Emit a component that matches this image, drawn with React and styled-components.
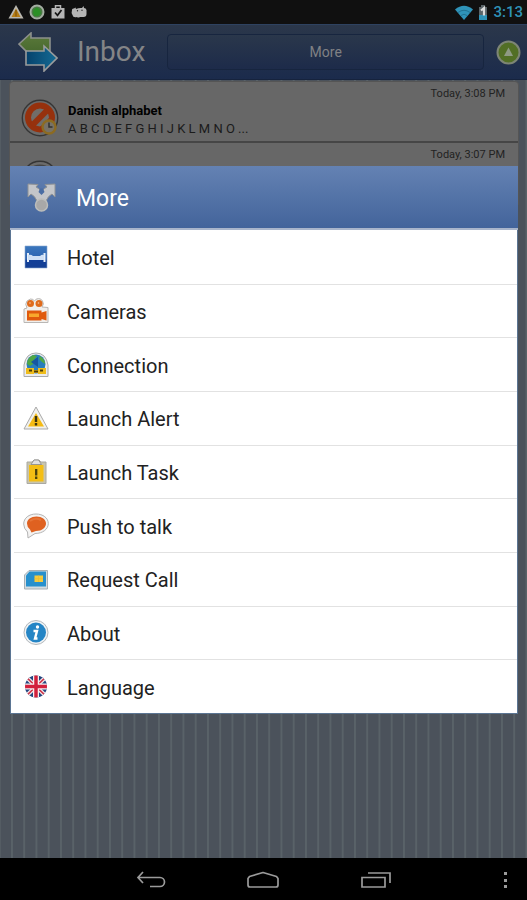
import React from "react";
import styled, { createGlobalStyle } from "styled-components";

const GlobalStyle = createGlobalStyle`
  * { box-sizing: border-box; }
  body { margin: 0; font-family: Roboto, "Noto Sans", sans-serif; background: #4b525b; }
  button { font: inherit; border: 0; padding: 0; background: none; cursor: pointer; }
  h1, h2, h3, p, ul { margin: 0; padding: 0; }
  svg { display: block; flex: none; }
`;

const Page = styled.div`
  position: relative;
  min-height: 100vh;
  display: flex;
  flex-direction: column;
`;

const StatusBar = styled.div`
  display: flex;
  align-items: center;
  justify-content: space-between;
  height: 24px;
  padding: 0 4px 0 8px;
  background: #101010;
`;

const StatusGroup = styled.div`
  display: flex;
  align-items: center;
  gap: 5px;
`;

const Clock = styled.time`
  color: #2f93b8;
  font-size: 15px;
  font-weight: 500;
  line-height: 24px;
`;

const Header = styled.header`
  display: flex;
  align-items: center;
  height: 56px;
  padding: 0 6px 0 18px;
  background: linear-gradient(#2b374a, #1b2b4c);
  border-top: 1px solid #2e4260;
  border-bottom: 1px solid #16233d;
`;

const Title = styled.h1`
  margin: 0 22px 0 19px;
  color: #848587;
  font-size: 28px;
  font-weight: 400;
  line-height: 32px;
`;

const MoreButton = styled.button`
  flex: 1;
  height: 36px;
  margin-right: 12px;
  border: 1px solid #17253f;
  border-radius: 4px;
  background: linear-gradient(#2a374b, #1d2b4a);
  color: #808184;
  font-size: 14px;
`;

const Main = styled.main`
  flex: 1;
  padding: 1px 8px 0 9px;
  background-color: #4b525b;
  background-image: linear-gradient(90deg, #596268 2px, transparent 2px);
  background-position: 11px 0;
  background-size: calc(100% / 43) 100%;
`;

const MessageList = styled.ul`
  list-style: none;
  border: 1px solid #555;
  border-radius: 4px 4px 0 0;
  background: #676767;
`;

const Message = styled.li`
  display: flex;
  align-items: flex-start;
  height: 61px;
  padding: 4px 13px 0 11px;
  border-bottom: 2px solid #464646;

  > svg { margin-top: 13px; }
`;

const MessageBody = styled.div`
  flex: 1;
  min-width: 0;
  margin-left: 9px;
  padding-top: 16px;
  color: #1b1b1b;
  font-size: 13px;
  line-height: 18px;
  white-space: nowrap;
`;

const Sender = styled.h3`
  color: #000;
  font-size: 13px;
  font-weight: 700;
  line-height: 18px;
`;

const MessageTime = styled.time`
  color: #222;
  font-size: 11px;
  line-height: 16px;
`;

const Overlay = styled.div`
  position: absolute;
  inset: 22px 0 42px;
  display: flex;
  align-items: center;
  padding: 0 9px 0 10px;
`;

const Dialog = styled.section`
  flex: 1;
  border: 1px solid #5b7593;
  border-top: 0;
  background: #fff;
`;

const DialogHeader = styled.header`
  display: flex;
  align-items: center;
  height: 64px;
  margin: 0 -1px;
  padding: 0 17px;
  gap: 20px;
  background: linear-gradient(#6482b3, #43649b);
  border-bottom: 2px solid #a9b5cb;
`;

const DialogTitle = styled.h2`
  padding-top: 3px;
  color: #fff;
  font-size: 23px;
  font-weight: 400;
  line-height: 28px;
`;

const Menu = styled.ul`
  list-style: none;
  display: grid;
  grid-auto-rows: 1fr;
  min-height: 483px;
`;

const MenuRow = styled.li`
  display: flex;
  margin-left: 3px;

  & + & { border-top: 1px solid #e2e2e2; }
`;

const MenuButton = styled.button`
  flex: 1;
  display: flex;
  align-items: center;
  gap: 18px;
  padding: 2px 9px 0;
  color: #222;
  font-size: 20px;
  line-height: 24px;
  text-align: left;

  svg { margin-bottom: 2px; }
`;

const NavBar = styled.nav`
  display: grid;
  grid-template-columns: 18% repeat(3, 1fr) 18%;
  height: 42px;
  background: #000;
`;

const NavButton = styled.button`
  display: flex;
  align-items: center;
  justify-content: ${(p) => (p.$end ? "flex-end" : "center")};
  padding: 2px ${(p) => (p.$end ? 19 : 0)}px 0 0;
  grid-column: ${(p) => p.$column};
`;

const StatusAlert = () => (
  <svg width="16" height="16" viewBox="0 0 16 16">
    <path d="M8 1 15.500 14.500H.5Z" fill="#b9b7b0" />
    <path d="M8 4.500 12.500 13h-9Z" fill="#b57c14" />
    <path d="M8 6v6.500" stroke="#8a5c0c" strokeWidth="1.500" />
  </svg>
);

const StatusSync = () => (
  <svg width="16" height="16" viewBox="0 0 16 16">
    <circle cx="8" cy="8" r="6.500" fill="#4b7a46" stroke="#a4ada2" strokeWidth="2" />
    <path d="M4.500 5.500 8 3.500l3 2 1 4-3 2.500H5.500L4 9Z" fill="#2b8f26" />
  </svg>
);

const StatusBag = () => (
  <svg width="16" height="16" viewBox="0 0 16 16">
    <path d="M5.500 4V1.800h5V4" fill="none" stroke="#b5b5b5" strokeWidth="1.500" />
    <path d="M1.500 4h13v10.500h-13Z" fill="#b5b5b5" />
    <path d="m5 8.500 2.500 2.800L11.500 6" fill="none" stroke="#151515" strokeWidth="1.700" />
  </svg>
);

const StatusDroid = () => (
  <svg width="16" height="16" viewBox="0 0 16 16">
    <path d="M1 6q0-2 2-1.500L4.500 3.500 5 5q3-1.500 6-1l1.500-2 .5 2q2 0 2.500 2v4q0 3-3 3H9q-2 1-3 0-4 1-4.500-2Q0 9 1 6Z" fill="#b5b5b5" />
    <circle cx="6.500" cy="6.800" r=".7" fill="#222" />
    <circle cx="11" cy="6.300" r=".7" fill="#222" />
  </svg>
);

const Wifi = () => (
  <svg width="18" height="15" viewBox="0 0 18 15">
    <path d="M0 4.500Q9-3 18 4.500L9 15Z" fill="#2f93b8" />
    <path d="M3 7.500q6-4.500 12 0M6 10.500q3-2.500 6 0" fill="none" stroke="#1d6a88" strokeWidth=".8" />
  </svg>
);

const Battery = () => (
  <svg width="10" height="15" viewBox="0 0 10 15">
    <path d="M3 0h4v2h2v13H1V2h2Z" fill="#5b6468" />
    <path d="M1 10h8v5H1Z" fill="#2f93b8" />
    <path d="M3 5.500 6 3v7.500" fill="none" stroke="#ddd" strokeWidth="2.200" />
  </svg>
);

const ArrowsLogo = () => (
  <svg width="40" height="40" viewBox="0 0 40 40">
    <defs>
      <linearGradient id="logoGreen" x1="0" x2="0" y1="0" y2="1">
        <stop stopColor="#5c7a3b" /><stop offset="1" stopColor="#44662c" />
      </linearGradient>
      <linearGradient id="logoBlue">
        <stop stopColor="#06426c" /><stop offset="1" stopColor="#156b94" />
      </linearGradient>
    </defs>
    <path d="M1 12 13 1v5h19v15H13v3Z" fill="url(#logoGreen)" stroke="#8d908c" strokeWidth="1.600" />
    <path d="M8 19h18v-5l13 12-13 13v-6H8Z" fill="url(#logoBlue)" stroke="#9a9c9c" strokeWidth="1.600" />
  </svg>
);

const UpBadge = () => (
  <svg width="25" height="25" viewBox="0 0 25 25">
    <circle cx="12.500" cy="12.500" r="11" fill="#526f25" stroke="#7d8575" strokeWidth="2" />
    <path d="M12.500 7.500 17 16H8Z" fill="#8f9a83" />
  </svg>
);

const BlockedClock = () => (
  <svg width="38" height="38" viewBox="0 0 38 38">
    <circle cx="19" cy="19" r="17.700" fill="#6b6b6b" stroke="#353535" strokeWidth="1.400" />
    <circle cx="19" cy="18.500" r="12" fill="#716d69" stroke="#96310d" strokeWidth="6" />
    <path d="m11 26.500 16-16" stroke="#96310d" strokeWidth="6" />
    <path d="m17 30 11-11v11Z" fill="#96310d" />
    <circle cx="28" cy="28" r="6.500" fill="#777267" stroke="#8c6b22" strokeWidth="2.400" />
    <path d="M28 23.500V28h3.500" fill="none" stroke="#303030" strokeWidth="1.500" />
  </svg>
);

const RingBadge = () => (
  <svg width="38" height="38" viewBox="0 0 38 38">
    <circle cx="19" cy="19" r="17.700" fill="#6b6b6b" stroke="#353535" strokeWidth="1.400" />
    <circle cx="19" cy="19" r="14.500" fill="#444" />
  </svg>
);

const ShareFork = () => (
  <svg width="29" height="29" viewBox="0 0 29 29">
    <path d="m1 1 10 .5L9 4q3 1 5.500 5Q17 5 20 4l-2-2.500L28 1v13l-3-3q-4 2-6 7h-9q-2-5-6-7l-3 3Z" fill="#c3c5c9" stroke="#8f9295" />
    <path d="m14.500 12-3-3 1.500-3.500h3L17.500 9Z" fill="#4a6da3" />
    <circle cx="14.500" cy="22" r="6" fill="#a8a8a8" stroke="#bcbdbb" strokeWidth="1.500" />
  </svg>
);

const HotelIcon = () => (
  <svg width="26" height="26" viewBox="0 0 26 26">
    <defs>
      <linearGradient id="hotelSky" x1="0" x2="0" y1="0" y2="1">
        <stop stopColor="#3b77bd" /><stop offset=".6" stopColor="#2c62b0" /><stop offset=".65" stopColor="#123f98" /><stop offset="1" stopColor="#153f93" />
      </linearGradient>
    </defs>
    <path d="M2 2h22v22H2Z" fill="url(#hotelSky)" stroke="#8aa7d0" strokeWidth=".6" />
    <path d="M5 9v9M21.500 9v9" stroke="#e6effa" strokeWidth="2" />
    <path d="M5 11q3-1 5 1h7q2-2 4-1v5H5Z" fill="#cfe0f5" />
  </svg>
);

const CameraIcon = () => (
  <svg width="26" height="26" viewBox="0 0 26 26">
    <path d="M7.500 1a4.500 4.500 0 0 1 4 2 4.500 4.500 0 0 1 8 0q2 3-.5 6l6 .5v15H1V11l3-1Q1.500 6 4 3Z" fill="#f1efec" stroke="#b9b7b5" />
    <circle cx="7.500" cy="5.500" r="3.500" fill="#df6b1c" />
    <circle cx="16" cy="5.500" r="3.500" fill="#df6b1c" />
    <circle cx="7" cy="5" r=".8" fill="#f8c3a0" /><circle cx="15.500" cy="5" r=".8" fill="#f8c3a0" />
    <path d="M4 12.500h14.500v2l5-1.500v9.500l-5-1.500v1.500H4Z" fill="#e05a0d" />
    <path d="M6 15.500h10V19H6Z" fill="#f8a82c" />
  </svg>
);

const ConnectionIcon = () => (
  <svg width="26" height="26" viewBox="0 0 26 26">
    <path d="M1 24.500V13Q3 1 13 1t12 12v11.500Z" fill="#ececec" stroke="#a8aaad" />
    <circle cx="13" cy="12" r="9.500" fill="#277dbd" />
    <path d="M4 12q0-6 6-9l4 1-3 4-1 4-3 2ZM17 4q5 3 5 8l-3-2-3-3Z" fill="#50a744" />
    <path d="m8 10 7-5v10Z" fill="#1657a1" />
    <path d="M3 16h8v2h4v-2h8v6h-8v-1h-4v1H3Z" fill="#efbd1c" />
    <path d="M6 18.500h3M17 18.500h3M11 19.500h4" stroke="#4b3c0a" strokeWidth="2" />
  </svg>
);

const AlertIcon = () => (
  <svg width="26" height="26" viewBox="0 0 26 26">
    <path d="M13 2 25 24H1Z" fill="#f1f1ee" stroke="#a9a9a9" strokeLinejoin="round" />
    <path d="M13 8 21 21.500H5Z" fill="#f5bb14" />
    <path d="M13 11v6M13 18v2.500" stroke="#3a3410" strokeWidth="2.400" />
  </svg>
);

const TaskIcon = () => (
  <svg width="26" height="26" viewBox="0 0 26 26">
    <path d="M4 3h5l2-2h5l2 2h5v21.500H4Z" fill="#c9c5ad" stroke="#aaa9a2" />
    <path d="M6 6h14.500v16.500H6Z" fill="#f4be14" />
    <path d="M8 5.500h10.500l-3-4.500h-4.500Z" fill="#e0e0e0" stroke="#888" strokeWidth=".8" />
    <path d="M13.200 10v6.500M13.200 17.500V20" stroke="#4a420d" strokeWidth="2.300" />
  </svg>
);

const TalkIcon = () => (
  <svg width="26" height="26" viewBox="0 0 26 26">
    <path d="M13 1c7 0 12.300 4 12.300 9.500S20 20.500 12 20.500L5 25l-.5-6Q.7 15.500.7 11C.7 5 6 1 13 1Z" fill="#f4f3f2" stroke="#b4b4b4" />
    <path d="M13.500 3.500c5.500 0 9.500 3 9.500 7s-4 7.500-10 7.500l-4.500 1.500-1.500-3Q4 14 4 10.500c0-4 4-7 9.500-7Z" fill="#df6120" />
    <path d="M7 8q5-4 11-1" fill="none" stroke="#e67436" strokeWidth="2" />
  </svg>
);

const SimIcon = () => (
  <svg width="26" height="26" viewBox="0 0 26 26">
    <path d="m6 4.500h18.500V23H1.500V9Z" fill="#d4dce0" stroke="#a7b0b6" />
    <path d="M6.500 5.500h16.500v15H3V9.500Z" fill="#2790cd" />
    <path d="M11.500 9.500H20v6.500h-8.500Z" fill="#f5cb3d" />
    <path d="M15.500 9.500V16M11.500 12.700H20" stroke="#edbb30" strokeWidth=".7" />
  </svg>
);

const InfoIcon = () => (
  <svg width="26" height="26" viewBox="0 0 26 26">
    <circle cx="13" cy="12.500" r="12" fill="#f0f3f5" stroke="#b3b8bc" />
    <circle cx="13" cy="12.500" r="10" fill="#2585c5" />
    <circle cx="14.500" cy="7" r="1.700" fill="#fff" />
    <path d="M10.500 11H14l-2 7.500h2.500" fill="none" stroke="#fff" strokeWidth="2.400" />
  </svg>
);

const FlagIcon = () => (
  <svg width="26" height="26" viewBox="0 0 26 26">
    <defs><clipPath id="flagRound"><circle cx="13" cy="12.500" r="11" /></clipPath></defs>
    <g clipPath="url(#flagRound)">
      <path d="M0 0h26v26H0Z" fill="#23457f" />
      <path d="m1 1 24 23M25 1 1 24" stroke="#f2e8ea" strokeWidth="4" />
      <path d="m1 1 24 23M25 1 1 24" stroke="#cf3347" strokeWidth="1.600" />
      <path d="M13 0v26M0 12.500h26" stroke="#f6eef0" strokeWidth="6" />
      <path d="M13 0v26M0 12.500h26" stroke="#d2203c" strokeWidth="3.500" />
    </g>
  </svg>
);

const BackIcon = () => (
  <svg width="30" height="18" viewBox="0 0 30 18" fill="none" stroke="#9b9b9b" strokeWidth="1.700">
    <path d="M7 1 2 6.500 7 12M2 6.500h22a4.500 4.500 0 0 1 0 9H14" />
  </svg>
);

const HomeIcon = () => (
  <svg width="34" height="18" viewBox="0 0 34 18" fill="none" stroke="#9b9b9b" strokeWidth="1.700">
    <path d="M17 1.500 30.500 5.500l1.500 2V14q0 2-2 2H4q-2 0-2-2V7.500l1.500-2Z" strokeLinejoin="round" />
  </svg>
);

const RecentIcon = () => (
  <svg width="32" height="18" viewBox="0 0 32 18" fill="none" stroke="#9b9b9b" strokeWidth="1.700">
    <path d="M2 6.500h23v9.500H2ZM8 2h22v10" />
  </svg>
);

const OverflowIcon = () => (
  <svg width="5" height="18" viewBox="0 0 5 18" fill="#9b9b9b">
    <path d="M1 1h3v3H1ZM1 8h3v3H1ZM1 14h3v3H1Z" />
  </svg>
);

const MENU = [
  ["Hotel", HotelIcon],
  ["Cameras", CameraIcon],
  ["Connection", ConnectionIcon],
  ["Launch Alert", AlertIcon],
  ["Launch Task", TaskIcon],
  ["Push to talk", TalkIcon],
  ["Request Call", SimIcon],
  ["About", InfoIcon],
  ["Language", FlagIcon],
];

export default function App() {
  return (
    <Page>
      <GlobalStyle />
      <StatusBar>
        <StatusGroup>
          <StatusAlert />
          <StatusSync />
          <StatusBag />
          <StatusDroid />
        </StatusGroup>
        <StatusGroup>
          <Wifi />
          <Battery />
          <Clock>3:13</Clock>
        </StatusGroup>
      </StatusBar>
      <Header>
        <ArrowsLogo />
        <Title>Inbox</Title>
        <MoreButton type="button">More</MoreButton>
        <button type="button" aria-label="Scroll up"><UpBadge /></button>
      </Header>
      <Main>
        <MessageList>
          <Message>
            <BlockedClock />
            <MessageBody>
              <Sender>Danish alphabet</Sender>
              <p>A B C D E F G H I J K L M N O ...</p>
            </MessageBody>
            <MessageTime>Today, 3:08 PM</MessageTime>
          </Message>
          <Message>
            <RingBadge />
            <MessageBody />
            <MessageTime>Today, 3:07 PM</MessageTime>
          </Message>
        </MessageList>
      </Main>
      <NavBar>
        <NavButton type="button" aria-label="Back" $column={2}><BackIcon /></NavButton>
        <NavButton type="button" aria-label="Home" $column={3}><HomeIcon /></NavButton>
        <NavButton type="button" aria-label="Recent apps" $column={4}><RecentIcon /></NavButton>
        <NavButton type="button" aria-label="More options" $column={5} $end><OverflowIcon /></NavButton>
      </NavBar>
      <Overlay>
        <Dialog role="dialog" aria-labelledby="dialog-title">
          <DialogHeader>
            <ShareFork />
            <DialogTitle id="dialog-title">More</DialogTitle>
          </DialogHeader>
          <Menu>
            {MENU.map(([label, Icon]) => (
              <MenuRow key={label}>
                <MenuButton type="button">
                  <Icon />
                  {label}
                </MenuButton>
              </MenuRow>
            ))}
          </Menu>
        </Dialog>
      </Overlay>
    </Page>
  );
}
